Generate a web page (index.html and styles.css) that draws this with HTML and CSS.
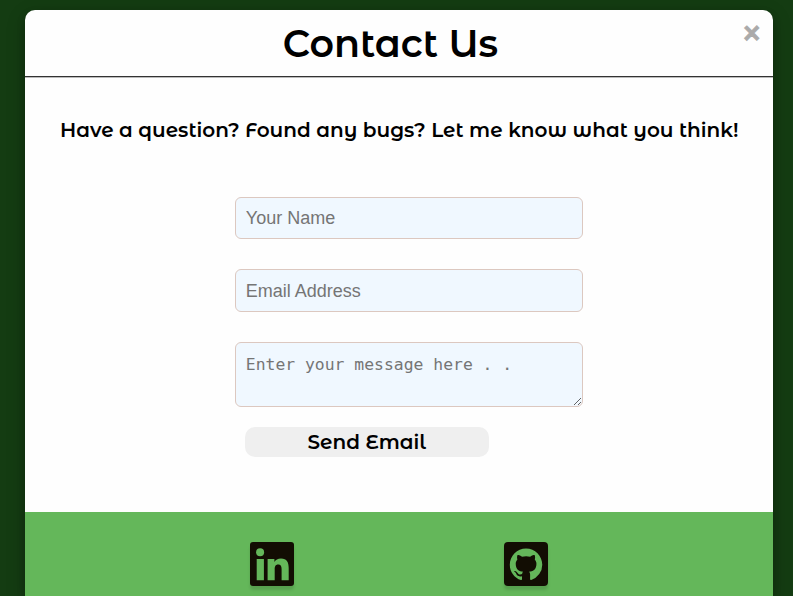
FILE: index.html
```html
<!DOCTYPE html>
<html lang="en">
<head>
<meta charset="utf-8">
<title>Contact Us</title>
<link rel="stylesheet" href="styles.css">
</head>
<body>
<main class="modal">
  <header class="modal-header">
    <h1 class="title">Contact Us</h1>
    <span class="close">&times;</span>
  </header>
  <section class="modal-body">
    <p class="intro">Have a question? Found any bugs? Let me know what you think!</p>
    <form class="form">
      <input class="field" type="text" placeholder="Your Name">
      <input class="field email" type="email" placeholder="Email Address">
      <textarea class="field message" placeholder="Enter your message here . ."></textarea>
      <button class="send" type="button">Send Email</button>
    </form>
  </section>
  <footer class="modal-footer">
    <a class="social"><svg viewBox="0 0 44 44"><rect width="44" height="44" rx="3"/><circle class="cutout" cx="10.1" cy="10.3" r="4"/><path class="cutout" d="M6.7 17h7.2v21.2H6.7zM17.6 17h6.8v2.9c1.2-2 3.4-3.5 6.6-3.5 6 0 7.7 3.8 7.7 9.7v12.1h-7.1V27.4c0-2.7-.5-5-3.4-5s-3.5 2.2-3.5 5v10.8h-7.1z"/></svg></a>
    <a class="social"><svg viewBox="0 0 44 44"><rect width="44" height="44" rx="4"/><path class="cutout" transform="translate(5.8 6.4) scale(2.03)" d="M8 0C3.58 0 0 3.58 0 8c0 3.54 2.29 6.53 5.47 7.59.4.07.55-.17.55-.38 0-.19-.01-.82-.01-1.49-2.01.37-2.53-.49-2.69-.94-.09-.23-.48-.94-.82-1.13-.28-.15-.68-.52-.01-.53.63-.01 1.08.58 1.23.82.72 1.21 1.87.87 2.33.66.07-.52.28-.87.51-1.07-1.78-.2-3.64-.89-3.64-3.95 0-.87.31-1.59.82-2.15-.08-.2-.36-1.02.08-2.12 0 0 .67-.21 2.2.82.64-.18 1.32-.27 2-.27s1.36.09 2 .27c1.53-1.04 2.2-.82 2.2-.82.44 1.1.16 1.92.08 2.12.51.56.82 1.27.82 2.15 0 3.07-1.87 3.75-3.65 3.95.29.25.54.73.54 1.48 0 1.07-.01 1.93-.01 2.2 0 .21.15.46.55.38A8.01 8.01 0 0 0 16 8c0-4.42-3.58-8-8-8z"/></svg></a>
  </footer>
</main>
</body>
</html>
```
FILE: styles.css
```css
* { box-sizing: border-box; }
body {
  margin: 0;
  height: 596px;
  padding: 10px 20.4px 0 25.2px;
  overflow: hidden;
  background: #143c12;
  font-family: "Montserrat Alternates", Montserrat, Inter, sans-serif;
  color: #000;
}
.modal {
  height: 586px;
  border-radius: 10px 10px 0 0;
  background: #fefefe;
  box-shadow: 0 4px 8px rgba(0, 0, 0, .2), 0 6px 20px rgba(0, 0, 0, .19);
}
.modal-header {
  display: grid;
  grid-template-columns: 1fr auto 1fr;
  height: 67px;
  border-bottom: 1px solid #333;
}
.title {
  grid-column: 2;
  margin: 0 0 0 -17px;
  font-size: 38px;
  font-weight: 600;
  line-height: 68px;
  white-space: nowrap;
}
.close {
  justify-self: end;
  margin-right: 12.4px;
  font: bold 29px/47px "Liberation Sans", Arial, sans-serif;
  color: #aaa;
  -webkit-text-stroke: .8px #aaa;
}
.modal-body {
  height: 435px;
  padding-top: 39px;
  border-top: 1px solid #bbb;
}
.intro {
  margin: 0 0 54px 34.8px;
  font-size: 20px;
  font-weight: 600;
  line-height: 26px;
  white-space: nowrap;
}
.form {
  display: flex;
  flex-direction: column;
  width: 348px;
  margin-left: 209.6px;
}
.field {
  display: block;
  width: 100%;
  height: 42.4px;
  margin: 0 0 30.1px;
  padding: 10px;
  border: 1px solid #dcc8c0;
  border-radius: 6px;
  background: #f0f8ff;
  font: 18px "Liberation Sans", Arial, sans-serif;
  outline: none;
}
.field::placeholder { color: #757575; opacity: 1; }
.email { padding-top: 11px; padding-bottom: 9px; }
.message {
  height: 65px;
  margin-bottom: 20px;
  padding-top: 12px;
  font: 16.4px/20px "DejaVu Sans Mono", monospace;
}
.send {
  width: 244px;
  height: 30px;
  margin-left: 10px;
  padding: 0;
  border: 0;
  border-radius: 10px;
  background: #efefef;
  color: #000;
  font-family: inherit;
  font-size: 20px;
  font-weight: 600;
}
.modal-footer {
  display: flex;
  gap: 210px;
  height: 84px;
  padding: 30.4px 0 0 225px;
  background: #64b75a;
}
.social {
  width: 44px;
  height: 44px;
  border-radius: 4px;
  box-shadow: 0 4px 3px rgba(0, 0, 0, .13);
}
.social svg { display: block; width: 44px; height: 44px; fill: #120d03; }
.social .cutout { fill: #64b75a; }
```
